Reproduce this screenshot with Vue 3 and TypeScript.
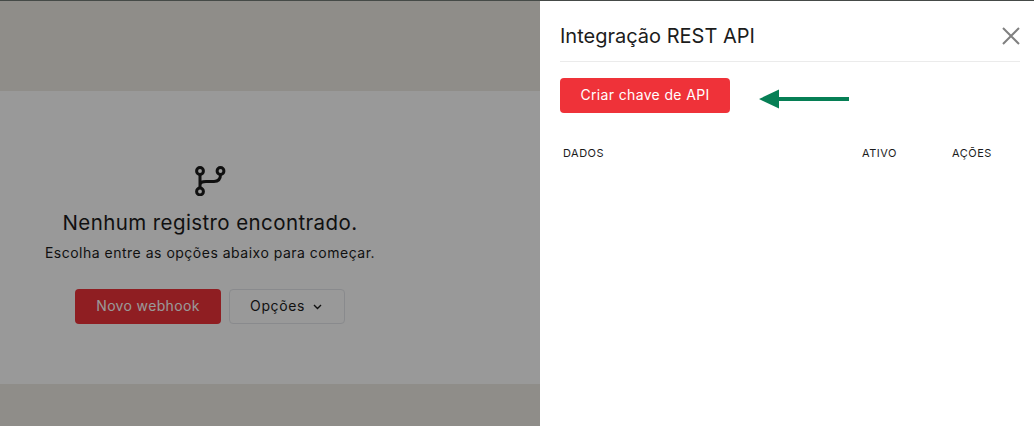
<script setup lang="ts">
// Tela de webhooks com o painel de integração REST API aberto
const columns = [
  { label: 'DADOS', cls: 'col-data' },
  { label: 'ATIVO', cls: 'col-active' },
  { label: 'AÇÕES', cls: 'col-actions' },
]
</script>

<template>
  <div class="page">
    <div class="top-line" />
    <div class="content">
      <div class="band" />
      <main class="empty-area">
        <div class="empty">
          <svg class="branch" width="32" height="32" viewBox="0 0 32 32" fill="none" stroke="#1c1c1c" stroke-width="3">
            <circle cx="6" cy="7" r="3.4" />
            <circle cx="26.500" cy="7" r="3.4" />
            <circle cx="6" cy="27.500" r="3.4" />
            <path d="M6 10.600V23.900M26.500 10.600C26.500 15 24 17.500 20 17.500H12C9 17.500 6 18.500 6 21" />
          </svg>
          <h2 class="empty-title">Nenhum registro encontrado.</h2>
          <p class="empty-text">Escolha entre as opções abaixo para começar.</p>
          <div class="empty-actions">
            <button class="btn btn-red btn-new">Novo webhook</button>
            <button class="btn btn-outline">
              Opções
              <svg class="chevron" width="9" height="6" viewBox="0 0 9 6" fill="none" stroke="#1c1c1c" stroke-width="1.400">
                <path d="M1 1l3.500 3.500L8 1" />
              </svg>
            </button>
          </div>
        </div>
      </main>
      <div class="band band-bottom" />
    </div>

    <div class="backdrop" />

    <aside class="drawer">
      <header class="drawer-head">
        <h1 class="drawer-title">Integração REST API</h1>
        <svg class="close" width="18" height="18" viewBox="0 0 18 18" stroke="#808080" stroke-width="2">
          <path d="M1 1l16 16M17 1L1 17" />
        </svg>
      </header>
      <div class="drawer-action">
        <button class="btn btn-red btn-key">Criar chave de API</button>
        <svg class="arrow" width="90" height="20" viewBox="0 0 90 20">
          <path d="M0 10L20 0.500V8V12V19.500ZM20 8H90V12H20Z" fill="#067f55" />
        </svg>
      </div>
      <div class="table-head">
        <span v-for="col in columns" :key="col.label" :class="col.cls">{{ col.label }}</span>
      </div>
    </aside>
  </div>
</template>

<style>
html,
body {
  margin: 0;
  background: #fff;
}
</style>

<style scoped>
.page {
  position: relative;
  width: 1034px;
  height: 426px;
  overflow: hidden;
  display: flex;
  flex-direction: column;
  font-family: Inter, "Noto Sans", sans-serif;
  color: #1c1c1c;
}

.top-line {
  position: relative;
  z-index: 3;
  height: 1px;
  flex: none;
  background: #454a47;
}

.content {
  flex: 1;
  display: flex;
  flex-direction: column;
}

.band {
  height: 90px;
  flex: none;
  background: #eeebe5;
}

.band-bottom {
  height: 42px;
}

.empty-area {
  flex: 1;
  background: #fff;
}

.empty {
  width: 420px;
  display: flex;
  flex-direction: column;
  align-items: center;
  padding-top: 73px;
}

.branch {
  display: block;
}

.empty-title {
  margin: 13px 0 0;
  font-size: 20.500px;
  line-height: 28px;
  font-weight: 400;
  letter-spacing: 0.4px;
  white-space: nowrap;
}

.empty-text {
  margin: 6px 0 0;
  font-size: 14px;
  line-height: 20px;
  letter-spacing: 0.5px;
  white-space: nowrap;
}

.empty-actions {
  display: flex;
  gap: 8px;
  margin-top: 26px;
}

.btn {
  height: 35px;
  box-sizing: border-box;
  border-radius: 4px;
  border: 0;
  padding: 0 0 2px;
  font-family: inherit;
  font-size: 14px;
  letter-spacing: 0.35px;
  display: flex;
  align-items: center;
  justify-content: center;
}

.btn-red {
  background: #ef3239;
  color: #fff;
  font-weight: 400;
}

.btn-new {
  width: 146px;
}

.btn-outline {
  width: 116px;
  gap: 8px;
  padding-right: 2px;
  background: transparent;
  border: 1px solid #e5e7eb;
  color: #1c1c1c;
  letter-spacing: 0.6px;
}

.chevron {
  margin-top: 2px;
}

.backdrop {
  position: absolute;
  inset: 0;
  z-index: 1;
  background: rgba(0, 0, 0, 0.4);
}

.drawer {
  position: absolute;
  top: 0;
  right: 0;
  bottom: 0;
  z-index: 2;
  width: 494px;
  box-sizing: border-box;
  padding: 1px 14px 0 20px;
  background: #fff;
}

.drawer-head {
  height: 61px;
  box-sizing: border-box;
  padding-top: 10px;
  display: flex;
  align-items: center;
  justify-content: space-between;
  border-bottom: 1px solid #ebebeb;
}

.drawer-title {
  margin: 0;
  font-size: 20px;
  line-height: 28px;
  font-weight: 400;
  white-space: nowrap;
}

.close {
  display: block;
  margin-top: -1px;
}

.drawer-action {
  display: flex;
  align-items: center;
  gap: 29px;
  margin-top: 16px;
}

.btn-key {
  width: 170px;
}

.arrow {
  display: block;
  margin-top: 6px;
}

.table-head {
  display: flex;
  align-items: center;
  margin-top: 31px;
  padding-left: 3px;
  height: 18px;
  font-size: 11px;
  letter-spacing: 0.5px;
}

.col-data {
  width: 299px;
}

.col-active {
  width: 90px;
}

.col-actions {
  width: 60px;
}
</style>
